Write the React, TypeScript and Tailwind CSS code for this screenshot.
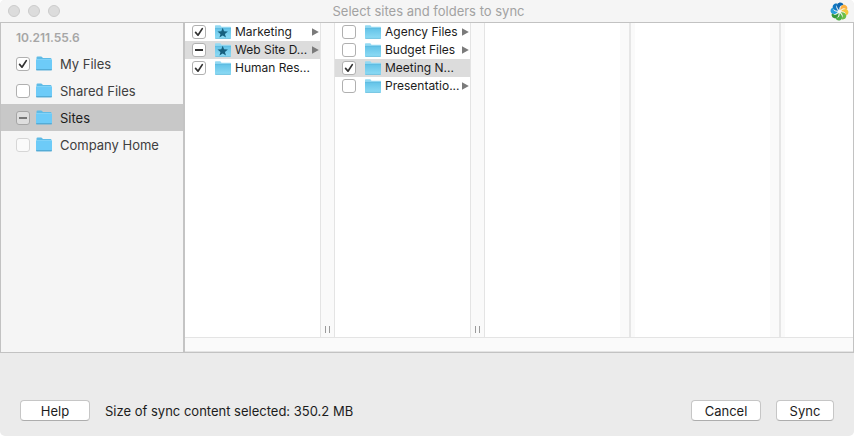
import { useId, useState } from "react";

type Check = "on" | "off" | "mixed";
type Item = {
  name: string;
  check: Check;
  site?: boolean;
  children?: boolean;
  selected?: boolean;
  disabled?: boolean;
};

const places: Item[] = [
  { name: "My Files", check: "on" },
  { name: "Shared Files", check: "off" },
  { name: "Sites", check: "mixed", selected: true },
  { name: "Company Home", check: "off", disabled: true },
];

const sites: Item[] = [
  { name: "Marketing", check: "on", site: true, children: true },
  { name: "Web Site D...", check: "mixed", site: true, children: true, selected: true },
  { name: "Human Res...", check: "on" },
];

const folders: Item[] = [
  { name: "Agency Files", check: "off", children: true },
  { name: "Budget Files", check: "off", children: true },
  { name: "Meeting N...", check: "on", selected: true },
  { name: "Presentatio...", check: "off", children: true },
];

function CheckBox({ id, initial, disabled, dim }: { id: string; initial: Check; disabled?: boolean; dim?: boolean }) {
  const [state, setState] = useState<Check>(initial);
  const look = disabled
    ? "border-[#d6d6d6] bg-[#fafafa]"
    : dim
      ? "border-[#a6a6a6] bg-[#dedede]"
      : "border-[#b0b0b0] bg-white";
  return (
    <span className="relative block size-3.5 shrink-0">
      <input
        id={id}
        type="checkbox"
        disabled={disabled}
        checked={state === "on"}
        ref={(el) => {
          if (el) el.indeterminate = state === "mixed";
        }}
        onChange={() => setState(state === "on" ? "off" : "on")}
        className={`block size-3.5 appearance-none rounded-[3px] border ${look}`}
      />
      <svg viewBox="0 0 14 14" className="pointer-events-none absolute inset-0 size-3.5" fill="none" aria-hidden="true">
        {state === "on" && (
          <path d="M3.6 7.4 L6 10.2 L10.3 3.6" stroke="#333" strokeWidth="1.7" strokeLinecap="round" strokeLinejoin="round" />
        )}
        {state === "mixed" && <path d="M3 7 H11" stroke={dim ? "#777" : "#333"} strokeWidth="1.8" />}
      </svg>
    </span>
  );
}

function PlaceFolder() {
  return (
    <svg viewBox="0 0 16 15" className="h-[15px] w-4 shrink-0" aria-hidden="true">
      <path d="M0.5 13.5 V1.6 Q0.5 0.5 1.6 0.5 H5 Q5.8 0.5 6.3 1.2 L6.9 2 H14.4 Q15.5 2 15.5 3.1 V13.5 Z" fill="#5fbbe6" />
      <path d="M0 3.7 H16 V13 Q16 14.3 14.8 14.3 H1.2 Q0 14.3 0 13 Z" fill="#6dcbf8" />
      <path d="M0.3 3.5 H15.7" stroke="#8ad8fb" strokeWidth="0.8" />
      <path d="M0.2 13.8 H15.8" stroke="#4b9fc8" strokeWidth="1" />
    </svg>
  );
}

function ItemFolder({ site }: { site?: boolean }) {
  return (
    <svg viewBox="0 0 16 14" className="h-3.5 w-4 shrink-0" aria-hidden="true">
      <defs>
        <linearGradient id="folderFront" x1="0" y1="0" x2="0" y2="1">
          <stop offset="0" stopColor="#63c3e8" />
          <stop offset="1" stopColor="#8fdcf5" />
        </linearGradient>
      </defs>
      <path d="M0 13 V0.8 Q0 0.2 0.7 0.2 H5 Q5.6 0.2 5.9 0.8 L6.4 1.7 H15.3 Q16 1.7 16 2.4 V13 Z" fill="#93d9f2" />
      <path d="M0 3.4 H16 V13 Q16 13.7 15.3 13.7 H0.7 Q0 13.7 0 13 Z" fill="url(#folderFront)" />
      <path d="M0 3.4 H16" stroke="#4fb3dc" strokeWidth="0.7" />
      <path d="M0.3 13.4 H15.7" stroke="#5eb8da" strokeWidth="0.7" />
      {site && (
        <path
          d="M7.7 2.8 L9.1 6.3 L12.9 6.5 L9.95 8.9 L10.95 12.6 L7.7 10.6 L4.45 12.6 L5.45 8.9 L2.5 6.5 L6.3 6.3 Z"
          fill="#17607e"
        />
      )}
    </svg>
  );
}

function PlaceRow({ item }: { item: Item }) {
  const id = useId();
  return (
    <li className={`flex h-[27px] items-center pl-[15px] ${item.selected ? "bg-[#c8c8c8]" : ""}`}>
      <CheckBox id={id} initial={item.check} disabled={item.disabled} dim={item.selected} />
      <span className="ml-1.5 flex">
        <PlaceFolder />
      </span>
      <label htmlFor={id} className={`ml-2 pt-px text-[13px] leading-4 ${item.selected ? "text-[#1c1c1c]" : "text-[#404040]"}`}>
        {item.name}
      </label>
    </li>
  );
}

function ItemRow({ item }: { item: Item }) {
  const id = useId();
  return (
    <li className={`flex h-[18px] items-center pr-px pl-[7px] ${item.selected ? "bg-[#dcdcdc]" : ""}`}>
      <CheckBox id={id} initial={item.check} />
      <span className="ml-[9px] flex">
        <ItemFolder site={item.site} />
      </span>
      <label htmlFor={id} className="ml-1 flex-1 text-[12px] leading-4 whitespace-nowrap text-[#1c1c1c]">
        {item.name}
      </label>
      {item.children && (
        <svg viewBox="0 0 7 8" className="h-2 w-[7px] shrink-0" aria-hidden="true">
          <path d="M0 0.2 L6.8 4 L0 7.8 Z" fill="#7b7b7b" />
        </svg>
      )}
    </li>
  );
}

function Column({ label, items }: { label: string; items: Item[] }) {
  return (
    <>
      <ul aria-label={label} className="w-[135px] shrink-0">
        {items.map((item) => (
          <ItemRow key={item.name} item={item} />
        ))}
      </ul>
      <div className="flex w-[15px] shrink-0 items-end justify-center gap-[3px] border-x border-[#e4e4e4] bg-[#fafafa] pb-1">
        <span className="h-[7px] w-px bg-[#9b9b9b]" />
        <span className="h-[7px] w-px bg-[#9b9b9b]" />
      </div>
    </>
  );
}

function EmptyColumn() {
  return (
    <>
      <div className="w-[135px] shrink-0" />
      <div className="flex w-[15px] shrink-0 bg-[#fafafa] pl-[9px]">
        <span className="w-0.5 bg-[#e6e6e6]" />
      </div>
    </>
  );
}

const petals = [
  { turn: 0, fill: "#0f66ae" },
  { turn: 45, fill: "#fbb040" },
  { turn: 90, fill: "#f5c93c" },
  { turn: 135, fill: "#6cbf4a" },
  { turn: 180, fill: "#4fb047" },
  { turn: 225, fill: "#36983a" },
  { turn: 270, fill: "#2a9fdc" },
  { turn: 315, fill: "#0f76c0" },
];

function Logo() {
  return (
    <svg viewBox="-10 -10 20 20" className="size-[19px]" role="img" aria-label="Alfresco">
      {petals.map(({ turn, fill }) => (
        <path
          key={turn}
          transform={`rotate(${turn})`}
          d="M-0.2 -1.6 C-2.6 -3.4 -3.2 -5.8 -2.2 -7.8 C-0.6 -10.2 3 -9.8 4 -7.4 C4.3 -6.4 3.4 -6.4 2.4 -6.4 C0.6 -6.2 -0.4 -4.4 -0.2 -1.6 Z"
          fill={fill}
        />
      ))}
    </svg>
  );
}

const buttonLook =
  "h-[21px] rounded-[4px] border border-[#c6c6c6] border-b-[#adadad] bg-white text-center text-[13px] leading-4 text-[#1c1c1c]";

export default function App() {
  return (
    <div className="min-h-screen bg-white font-[Inter,'Liberation_Sans',sans-serif]">
      <div className="flex min-h-screen flex-col overflow-hidden rounded-[5px] bg-[#ebebeb]">
        <header className="grid h-[22px] grid-cols-[1fr_auto_1fr] items-center bg-[#f5f5f5] pr-[5px] pl-2">
          <div className="flex gap-2">
            <button type="button" aria-label="Close" className="size-3 rounded-full border border-[#cbcbcb] bg-[#dcdcdc]" />
            <button type="button" aria-label="Minimize" className="size-3 rounded-full border border-[#cbcbcb] bg-[#dcdcdc]" />
            <button type="button" aria-label="Zoom" className="size-3 rounded-full border border-[#cbcbcb] bg-[#dcdcdc]" />
          </div>
          <h1 className="text-[13px] leading-4 text-[#a2a2a2]">Select sites and folders to sync</h1>
          <div className="flex justify-end">
            <Logo />
          </div>
        </header>

        <main className="flex flex-1 border border-[#c2c2c2]">
          <nav className="w-[184px] shrink-0 border-r-2 border-[#c4c4c4] bg-[#f5f5f5] pt-1.5">
            <h2 className="pl-[15px] text-[12px] leading-[18px] font-semibold text-[#a6a6a6]">10.211.55.6</h2>
            <ul className="pt-[3px]">
              {places.map((item) => (
                <PlaceRow key={item.name} item={item} />
              ))}
            </ul>
          </nav>
          <section aria-label="Folders" className="flex min-w-0 flex-1 flex-col bg-white">
            <div className="flex flex-1 overflow-hidden">
              <Column label="Sites" items={sites} />
              <Column label="Site folders" items={folders} />
              <EmptyColumn />
              <EmptyColumn />
            </div>
            <div className="h-[15px] border-y border-[#e4e4e4] bg-[#fafafa]" />
          </section>
        </main>

        <footer className="flex h-[83px] items-end gap-[15px] px-5 pb-[15px]">
          <button type="button" className={`${buttonLook} w-[70px]`}>Help</button>
          <p className="flex-1 text-[13px] leading-5 text-[#1c1c1c]">Size of sync content selected: 350.2 MB</p>
          <button type="button" className={`${buttonLook} w-[70px]`}>Cancel</button>
          <button type="button" className={`${buttonLook} w-[58px]`}>Sync</button>
        </footer>
      </div>
    </div>
  );
}
